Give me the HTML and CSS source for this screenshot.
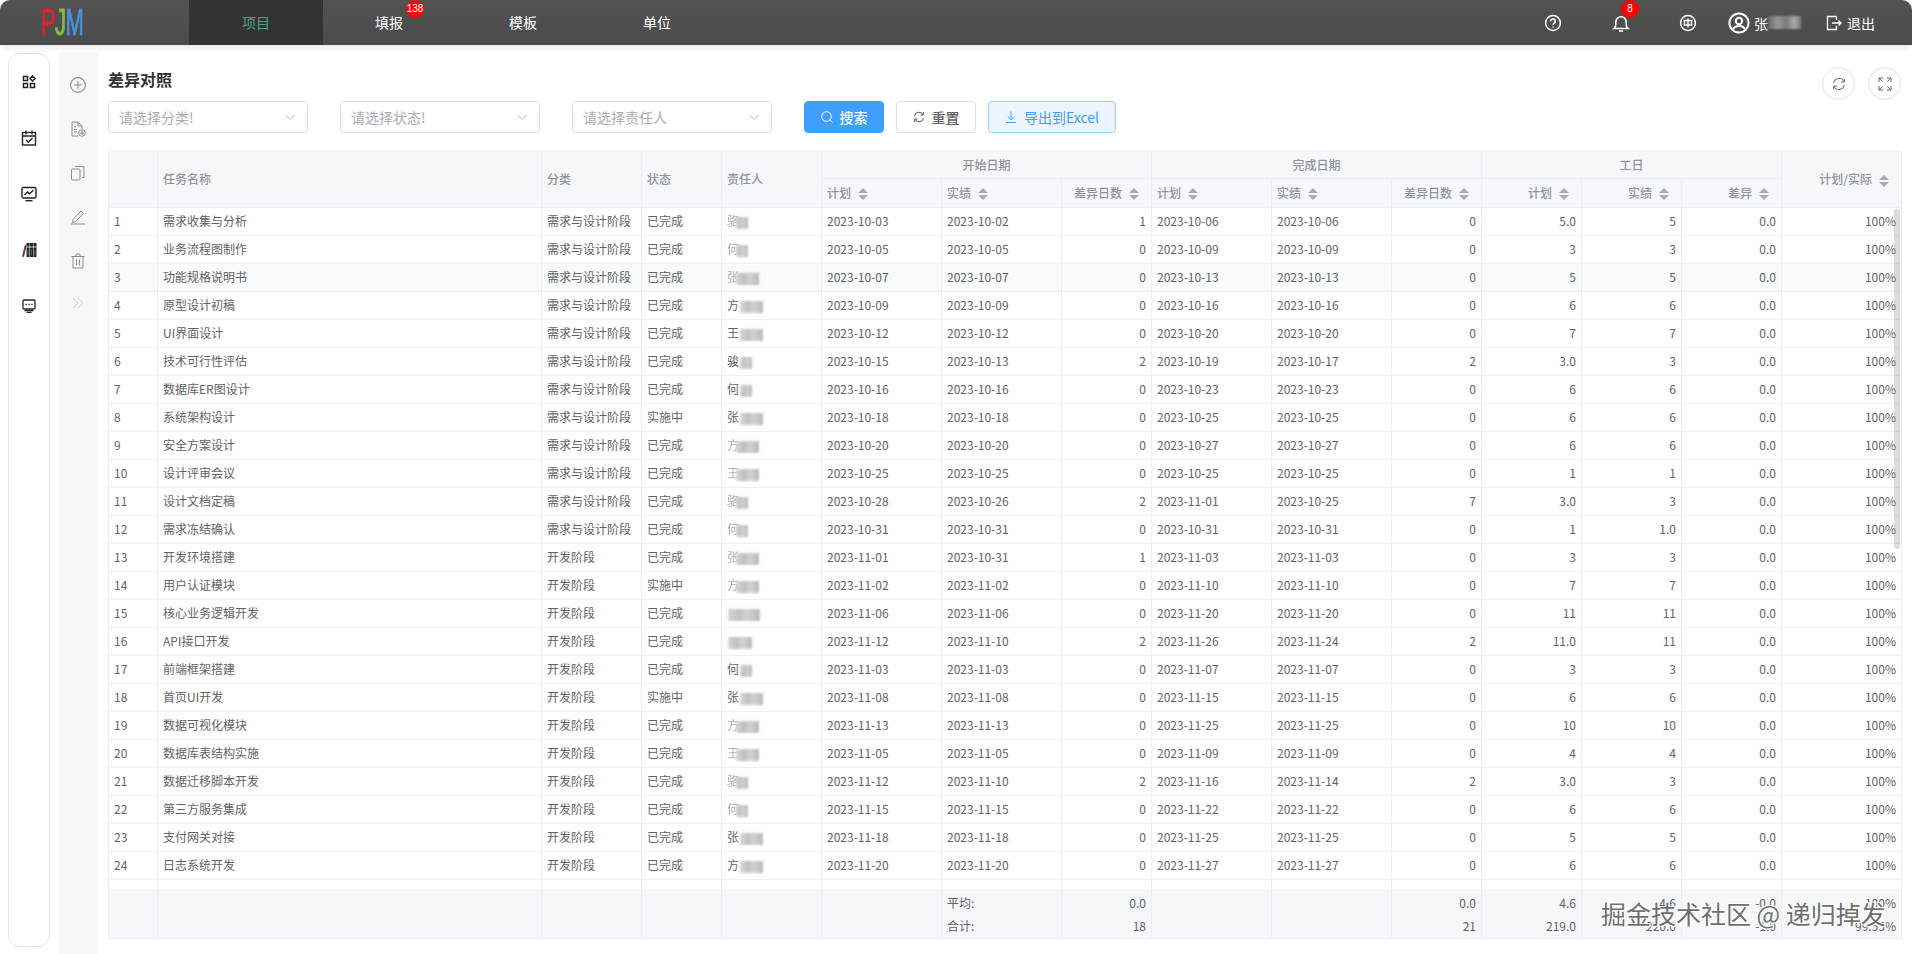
FILE: index.html
```html
<!DOCTYPE html>
<html lang="zh">
<head>
<meta charset="utf-8">
<title>差异对照</title>
<link rel="stylesheet" href="styles.css">
</head>
<body>
<header class="nav">
  <div class="logo"><span class="logo-text"><b class="lp">P</b><b class="lj">J</b><b class="lm">M</b></span></div>
  <a class="tab active">项目</a>
  <a class="tab">填报<span class="badge b-tab">138</span></a>
  <a class="tab">模板</a>
  <a class="tab">单位</a>
  <div class="nav-right">
    <span class="ni ni-help"><svg viewBox="0 0 18 18" width="18" height="18" fill="none" stroke="#fff" stroke-width="1.5"><circle cx="9" cy="9" r="7.4"/><path d="M6.7 7.2a2.3 2.3 0 1 1 3.5 2c-.8.5-1.2.9-1.2 1.8"/><path d="M9 12.4v1.2"/></svg></span>
    <span class="ni ni-bell"><svg viewBox="0 0 20 20" width="20" height="20" fill="none" stroke="#fff" stroke-width="1.6"><path d="M3 15.5c1.2-1 1.8-2 1.8-4V9a5.2 5.2 0 0 1 10.4 0v2.500c0 2 .6 3 1.800 4z"/><path d="M8 18h4"/></svg><span class="badge b-bell">8</span></span>
    <span class="ni ni-lang"><svg viewBox="0 0 18 18" width="18" height="18" fill="none" stroke="#fff" stroke-width="1.5"><circle cx="9" cy="9" r="7.4"/><path d="M5.500 6.500h7v4.500h-7z"/><path d="M9 4.500v9"/></svg></span>
    <span class="ni ni-user"><svg viewBox="0 0 22 22" width="22" height="22" fill="none" stroke="#fff" stroke-width="2"><circle cx="11" cy="11" r="9.600"/><circle cx="11" cy="9" r="3.200"/><path d="M5 17.500c1-2.600 3.200-3.500 6-3.500s5 .9 6 3.500"/></svg></span>
    <span class="uname">张<i class="uname-blur"></i></span>
    <span class="ni ni-out"><svg viewBox="0 0 16 16" width="16" height="16" fill="none" stroke="#fff" stroke-width="1.300"><path d="M10.500 1.500h-9v13h9v-3.500"/><path d="M10.500 5V1.500"/><path d="M6 8h9M12.500 5.500 15 8l-2.500 2.500"/></svg></span>
    <span class="logout">退出</span>
  </div>
</header>

<div class="shell">
  <aside class="side">
    <svg class="si" viewBox="0 0 14 14" width="14" height="14" fill="none" stroke="#222" stroke-width="1.500"><rect x="1.500" y="1.500" width="4" height="4"/><rect x="1.500" y="8.500" width="4" height="4"/><rect x="8.500" y="8.500" width="4" height="4"/><path d="M10.500 1 13 3.500 10.500 6 8 3.500z"/></svg>
    <svg class="si" viewBox="0 0 16 16" width="16" height="16" fill="none" stroke="#222" stroke-width="1.400"><rect x="1.500" y="2.500" width="13" height="12.500"/><path d="M1.500 6h13M5 .5v4M11 .5v4"/><path d="m5 10 2.300 2.300L11.500 8"/></svg>
    <svg class="si" viewBox="0 0 16 16" width="16" height="16" fill="none" stroke="#222" stroke-width="1.400"><rect x="1" y="1.500" width="14" height="10.500" rx="1.500"/><path d="m3.500 9 3-3 2 1.800L12.500 4"/><path d="M4.500 14.700h7"/></svg>
    <svg class="si" viewBox="0 0 16 16" width="16" height="16"><path d="M5.500 1h3v14h-3zM9 1h3v14H9zM12.500 1H15.500v14h-3z" fill="#222"/><path d="M1 14.500 3.800 3l1.700.5L3 15z" fill="#6d3a3a"/><path d="M5.500 5h10" stroke="#fff" stroke-width=".8"/><path d="M7 7.500v6M10.500 7.500v6M14 7.500v6" stroke="#777" stroke-width=".7"/></svg>
    <svg class="si si-last" viewBox="0 0 14 14" width="14" height="14" fill="none" stroke="#222" stroke-width="1.300"><rect x="1" y="1" width="12" height="9" rx="1.200"/><path d="M3.500 5.500h1.300M6.400 5.500h1.300M9.300 5.500h1.300" stroke-width="1.400"/><path d="M2.500 11.600h9M4.500 13.300h5"/></svg>
  </aside>
  <nav class="tools">
    <svg viewBox="0 0 16 16" width="16" height="16" fill="none" stroke="#8c8c8c" stroke-width="1.100"><circle cx="8" cy="8" r="7.400"/><path d="M8 4v8M4 8h8"/></svg>
    <svg viewBox="0 0 16 16" width="16" height="16" fill="none" stroke="#8c8c8c" stroke-width="1"><path d="M8 15H2V1h6l4 4v3"/><path d="M8 1v4h4M4 6h2M4 8.500h3M4 11h3"/><circle cx="12" cy="12" r="3.300"/><path d="M12 10v4M10 12h4"/></svg>
    <svg viewBox="0 0 16 16" width="16" height="16" fill="none" stroke="#8c8c8c" stroke-width="1"><rect x="1.500" y="4" width="8.500" height="11" rx="1"/><path d="M5 1.500h9v11h-2"/></svg>
    <svg viewBox="0 0 16 16" width="16" height="16" fill="none" stroke="#8c8c8c" stroke-width="1"><path d="m3 10.500 8-8.500 2.500 2.300-8 8.400-3 .8z"/><path d="M1 15h14"/></svg>
    <svg viewBox="0 0 16 16" width="16" height="16" fill="none" stroke="#8c8c8c" stroke-width="1"><path d="M1.500 3.500h13M6 3.500V1h4v2.500"/><path d="M3 3.500V15h10V3.500"/><path d="M6.500 6.500v6M9.500 6.500v6"/></svg>
    <svg class="t-more" viewBox="0 0 12 12" width="12" height="12" fill="none" stroke="#d0d0d0" stroke-width="1"><path d="m1 1 5 5-5 5M6 1l5 5-5 5"/></svg>
  </nav>

  <main class="main">
    <div class="head">
      <h1 class="title">差异对照</h1>
      <div class="round-group">
        <span class="round"><svg viewBox="0 0 14 14" width="14" height="14" fill="none" stroke="#666" stroke-width="1"><path d="M1.500 6A5.600 5.600 0 0 1 12 4.500"/><path d="M12.500 8A5.600 5.600 0 0 1 2 9.500"/><path d="M12.300 1.800V5H9.200M1.700 12.200V9h3.100"/></svg></span>
        <span class="round"><svg viewBox="0 0 14 14" width="14" height="14" fill="none" stroke="#666" stroke-width="1"><path d="M1 5V1h4M13 5V1H9M1 9v4h4M13 9v4H9"/><path d="m1 1 3.500 3.500M13 1 9.500 4.500M1 13l3.500-3.500M13 13 9.500 9.500"/></svg></span>
      </div>
    </div>

    <div class="filters">
      <div class="select"><span>请选择分类!</span><svg viewBox="0 0 12 12" width="12" height="12" fill="none" stroke="#a8abb2"><path d="m1.500 4 4.500 4.500L10.500 4"/></svg></div>
      <div class="select"><span>请选择状态!</span><svg viewBox="0 0 12 12" width="12" height="12" fill="none" stroke="#a8abb2"><path d="m1.500 4 4.500 4.500L10.500 4"/></svg></div>
      <div class="select"><span>请选择责任人</span><svg viewBox="0 0 12 12" width="12" height="12" fill="none" stroke="#a8abb2"><path d="m1.500 4 4.500 4.500L10.500 4"/></svg></div>
      <div class="btns">
        <button class="btn primary"><svg viewBox="0 0 12 12" width="12" height="12" fill="none" stroke="#fff"><circle cx="5.500" cy="5.500" r="4.800"/><path d="m9 9 2.500 2.500"/></svg>搜索</button>
        <button class="btn"><svg viewBox="0 0 12 12" width="12" height="12" fill="none" stroke="#555"><path d="M1.500 5A4.600 4.600 0 0 1 10 3.500M10.500 7A4.600 4.600 0 0 1 2 8.500"/><path d="M10.300 1v3H7.500M1.700 11V8h2.800"/></svg>重置</button>
        <button class="btn export"><svg viewBox="0 0 12 12" width="12" height="12" fill="none" stroke="#409eff"><path d="M6 .5v8M2.800 5.500 6 8.700l3.200-3.200M1 11.500h10"/></svg>导出到Excel</button>
      </div>
    </div>

    <div class="table-wrap">
      <table class="grid">
        <colgroup>
          <col class="c-no"><col class="c-name"><col class="c-cat"><col class="c-st"><col class="c-own">
          <col class="c-120"><col class="c-120"><col class="c-90">
          <col class="c-120"><col class="c-120"><col class="c-90">
          <col class="c-100"><col class="c-100"><col class="c-100"><col class="c-120">
        </colgroup>
        <thead>
          <tr class="h1">
            <th rowspan="2"></th><th rowspan="2">任务名称</th><th rowspan="2">分类</th><th rowspan="2">状态</th><th rowspan="2">责任人</th>
            <th colspan="3" class="ctr">开始日期</th><th colspan="3" class="ctr">完成日期</th><th colspan="3" class="ctr">工日</th>
            <th rowspan="2" class="r">计划/实际<span class="sort"></span></th>
          </tr>
          <tr class="h2">
            <th>计划<span class="sort"></span></th><th>实绩<span class="sort"></span></th><th class="r">差异日数<span class="sort"></span></th>
            <th>计划<span class="sort"></span></th><th>实绩<span class="sort"></span></th><th class="r">差异日数<span class="sort"></span></th>
            <th class="r">计划<span class="sort"></span></th><th class="r">实绩<span class="sort"></span></th><th class="r">差异<span class="sort"></span></th>
          </tr>
        </thead>
        <tbody>
          <tr><td>1</td><td>需求收集与分析</td><td>需求与设计阶段</td><td>已完成</td><td><span class="half">骆</span><i class="bl w2"></i></td><td>2023-10-03</td><td>2023-10-02</td><td class="r">1</td><td>2023-10-06</td><td>2023-10-06</td><td class="r">0</td><td class="r">5.0</td><td class="r">5</td><td class="r">0.0</td><td class="r">100%</td></tr>
          <tr><td>2</td><td>业务流程图制作</td><td>需求与设计阶段</td><td>已完成</td><td><span class="half">何</span><i class="bl w2"></i></td><td>2023-10-05</td><td>2023-10-05</td><td class="r">0</td><td>2023-10-09</td><td>2023-10-09</td><td class="r">0</td><td class="r">3</td><td class="r">3</td><td class="r">0.0</td><td class="r">100%</td></tr>
          <tr class="hover"><td>3</td><td>功能规格说明书</td><td>需求与设计阶段</td><td>已完成</td><td><span class="half">张</span><i class="bl w3"></i></td><td>2023-10-07</td><td>2023-10-07</td><td class="r">0</td><td>2023-10-13</td><td>2023-10-13</td><td class="r">0</td><td class="r">5</td><td class="r">5</td><td class="r">0.0</td><td class="r">100%</td></tr>
          <tr><td>4</td><td>原型设计初稿</td><td>需求与设计阶段</td><td>已完成</td><td>方<i class="bl w3"></i></td><td>2023-10-09</td><td>2023-10-09</td><td class="r">0</td><td>2023-10-16</td><td>2023-10-16</td><td class="r">0</td><td class="r">6</td><td class="r">6</td><td class="r">0.0</td><td class="r">100%</td></tr>
          <tr><td>5</td><td>UI界面设计</td><td>需求与设计阶段</td><td>已完成</td><td>王<i class="bl w3"></i></td><td>2023-10-12</td><td>2023-10-12</td><td class="r">0</td><td>2023-10-20</td><td>2023-10-20</td><td class="r">0</td><td class="r">7</td><td class="r">7</td><td class="r">0.0</td><td class="r">100%</td></tr>
          <tr><td>6</td><td>技术可行性评估</td><td>需求与设计阶段</td><td>已完成</td><td>骏<i class="bl w2"></i></td><td>2023-10-15</td><td>2023-10-13</td><td class="r">2</td><td>2023-10-19</td><td>2023-10-17</td><td class="r">2</td><td class="r">3.0</td><td class="r">3</td><td class="r">0.0</td><td class="r">100%</td></tr>
          <tr><td>7</td><td>数据库ER图设计</td><td>需求与设计阶段</td><td>已完成</td><td>何<i class="bl w2"></i></td><td>2023-10-16</td><td>2023-10-16</td><td class="r">0</td><td>2023-10-23</td><td>2023-10-23</td><td class="r">0</td><td class="r">6</td><td class="r">6</td><td class="r">0.0</td><td class="r">100%</td></tr>
          <tr><td>8</td><td>系统架构设计</td><td>需求与设计阶段</td><td>实施中</td><td>张<i class="bl w3"></i></td><td>2023-10-18</td><td>2023-10-18</td><td class="r">0</td><td>2023-10-25</td><td>2023-10-25</td><td class="r">0</td><td class="r">6</td><td class="r">6</td><td class="r">0.0</td><td class="r">100%</td></tr>
          <tr><td>9</td><td>安全方案设计</td><td>需求与设计阶段</td><td>已完成</td><td><span class="half">方</span><i class="bl w3"></i></td><td>2023-10-20</td><td>2023-10-20</td><td class="r">0</td><td>2023-10-27</td><td>2023-10-27</td><td class="r">0</td><td class="r">6</td><td class="r">6</td><td class="r">0.0</td><td class="r">100%</td></tr>
          <tr><td>10</td><td>设计评审会议</td><td>需求与设计阶段</td><td>已完成</td><td><span class="half">王</span><i class="bl w3"></i></td><td>2023-10-25</td><td>2023-10-25</td><td class="r">0</td><td>2023-10-25</td><td>2023-10-25</td><td class="r">0</td><td class="r">1</td><td class="r">1</td><td class="r">0.0</td><td class="r">100%</td></tr>
          <tr><td>11</td><td>设计文档定稿</td><td>需求与设计阶段</td><td>已完成</td><td><span class="half">骆</span><i class="bl w2"></i></td><td>2023-10-28</td><td>2023-10-26</td><td class="r">2</td><td>2023-11-01</td><td>2023-10-25</td><td class="r">7</td><td class="r">3.0</td><td class="r">3</td><td class="r">0.0</td><td class="r">100%</td></tr>
          <tr><td>12</td><td>需求冻结确认</td><td>需求与设计阶段</td><td>已完成</td><td><span class="half">何</span><i class="bl w2"></i></td><td>2023-10-31</td><td>2023-10-31</td><td class="r">0</td><td>2023-10-31</td><td>2023-10-31</td><td class="r">0</td><td class="r">1</td><td class="r">1.0</td><td class="r">0.0</td><td class="r">100%</td></tr>
          <tr><td>13</td><td>开发环境搭建</td><td>开发阶段</td><td>已完成</td><td><span class="half">张</span><i class="bl w3"></i></td><td>2023-11-01</td><td>2023-10-31</td><td class="r">1</td><td>2023-11-03</td><td>2023-11-03</td><td class="r">0</td><td class="r">3</td><td class="r">3</td><td class="r">0.0</td><td class="r">100%</td></tr>
          <tr><td>14</td><td>用户认证模块</td><td>开发阶段</td><td>实施中</td><td><span class="half">方</span><i class="bl w3"></i></td><td>2023-11-02</td><td>2023-11-02</td><td class="r">0</td><td>2023-11-10</td><td>2023-11-10</td><td class="r">0</td><td class="r">7</td><td class="r">7</td><td class="r">0.0</td><td class="r">100%</td></tr>
          <tr><td>15</td><td>核心业务逻辑开发</td><td>开发阶段</td><td>已完成</td><td><i class="bl w4"></i></td><td>2023-11-06</td><td>2023-11-06</td><td class="r">0</td><td>2023-11-20</td><td>2023-11-20</td><td class="r">0</td><td class="r">11</td><td class="r">11</td><td class="r">0.0</td><td class="r">100%</td></tr>
          <tr><td>16</td><td>API接口开发</td><td>开发阶段</td><td>已完成</td><td><i class="bl w5"></i></td><td>2023-11-12</td><td>2023-11-10</td><td class="r">2</td><td>2023-11-26</td><td>2023-11-24</td><td class="r">2</td><td class="r">11.0</td><td class="r">11</td><td class="r">0.0</td><td class="r">100%</td></tr>
          <tr><td>17</td><td>前端框架搭建</td><td>开发阶段</td><td>已完成</td><td>何<i class="bl w2"></i></td><td>2023-11-03</td><td>2023-11-03</td><td class="r">0</td><td>2023-11-07</td><td>2023-11-07</td><td class="r">0</td><td class="r">3</td><td class="r">3</td><td class="r">0.0</td><td class="r">100%</td></tr>
          <tr><td>18</td><td>首页UI开发</td><td>开发阶段</td><td>实施中</td><td>张<i class="bl w3"></i></td><td>2023-11-08</td><td>2023-11-08</td><td class="r">0</td><td>2023-11-15</td><td>2023-11-15</td><td class="r">0</td><td class="r">6</td><td class="r">6</td><td class="r">0.0</td><td class="r">100%</td></tr>
          <tr><td>19</td><td>数据可视化模块</td><td>开发阶段</td><td>已完成</td><td><span class="half">方</span><i class="bl w3"></i></td><td>2023-11-13</td><td>2023-11-13</td><td class="r">0</td><td>2023-11-25</td><td>2023-11-25</td><td class="r">0</td><td class="r">10</td><td class="r">10</td><td class="r">0.0</td><td class="r">100%</td></tr>
          <tr><td>20</td><td>数据库表结构实施</td><td>开发阶段</td><td>已完成</td><td><span class="half">王</span><i class="bl w3"></i></td><td>2023-11-05</td><td>2023-11-05</td><td class="r">0</td><td>2023-11-09</td><td>2023-11-09</td><td class="r">0</td><td class="r">4</td><td class="r">4</td><td class="r">0.0</td><td class="r">100%</td></tr>
          <tr><td>21</td><td>数据迁移脚本开发</td><td>开发阶段</td><td>已完成</td><td><span class="half">骆</span><i class="bl w2"></i></td><td>2023-11-12</td><td>2023-11-10</td><td class="r">2</td><td>2023-11-16</td><td>2023-11-14</td><td class="r">2</td><td class="r">3.0</td><td class="r">3</td><td class="r">0.0</td><td class="r">100%</td></tr>
          <tr><td>22</td><td>第三方服务集成</td><td>开发阶段</td><td>已完成</td><td><span class="half">何</span><i class="bl w2"></i></td><td>2023-11-15</td><td>2023-11-15</td><td class="r">0</td><td>2023-11-22</td><td>2023-11-22</td><td class="r">0</td><td class="r">6</td><td class="r">6</td><td class="r">0.0</td><td class="r">100%</td></tr>
          <tr><td>23</td><td>支付网关对接</td><td>开发阶段</td><td>已完成</td><td>张<i class="bl w3"></i></td><td>2023-11-18</td><td>2023-11-18</td><td class="r">0</td><td>2023-11-25</td><td>2023-11-25</td><td class="r">0</td><td class="r">5</td><td class="r">5</td><td class="r">0.0</td><td class="r">100%</td></tr>
          <tr><td>24</td><td>日志系统开发</td><td>开发阶段</td><td>已完成</td><td>方<i class="bl w3"></i></td><td>2023-11-20</td><td>2023-11-20</td><td class="r">0</td><td>2023-11-27</td><td>2023-11-27</td><td class="r">0</td><td class="r">6</td><td class="r">6</td><td class="r">0.0</td><td class="r">100%</td></tr>
          <tr class="gap"><td></td><td></td><td></td><td></td><td></td><td></td><td></td><td></td><td></td><td></td><td></td><td></td><td></td><td></td><td></td></tr>
        </tbody>
        <tfoot>
          <tr class="f1"><td></td><td></td><td></td><td></td><td></td><td></td><td>平均:</td><td class="r">0.0</td><td></td><td></td><td class="r">0.0</td><td class="r">4.6</td><td class="r">4.6</td><td class="r">-0.0</td><td class="r">100%</td></tr>
          <tr class="f2"><td></td><td></td><td></td><td></td><td></td><td></td><td>合计:</td><td class="r">18</td><td></td><td></td><td class="r">21</td><td class="r">219.0</td><td class="r">220.0</td><td class="r">-1.0</td><td class="r">99.55%</td></tr>
        </tfoot>
      </table>
      <span class="scroll-thumb"></span>
    </div>
  </main>
</div>
<div class="watermark">掘金技术社区 @ 递归掉发</div>
</body>
</html>
```
FILE: styles.css
```css
* { box-sizing: border-box; }
html, body { margin: 0; height: 100%; }
body {
  width: 1912px;
  height: 954px;
  overflow: hidden;
  background: #fff;
  font-family: "Noto Sans CJK SC", "Noto Sans", sans-serif;
  font-size: 12px;
  color: #606266;
  display: flex;
  flex-direction: column;
}

/* top bar */
.nav {
  height: 45px;
  flex: none;
  display: flex;
  background: linear-gradient(#535353, #4b4b4b);
  border-radius: 10px 10px 0 0;
  color: #fff;
  box-shadow: 0 3px 6px rgba(0, 0, 0, .09);
  position: relative;
  z-index: 2;
}
.logo { width: 189px; padding-left: 41px; flex: none; }
.logo-text {
  display: inline-block;
  font: 400 36px/45px "Liberation Sans", sans-serif;
  letter-spacing: -1px;
  transform: scaleX(.61);
  transform-origin: 0 50%;
  white-space: nowrap;
  -webkit-text-stroke: 1px currentColor;
}
.logo-text b { font-weight: 400; }
.lp { color: #e0202a; }
.lj { color: #86bc3e; }
.lm { color: #4a8fd8; }
.tab {
  position: relative;
  width: 134px;
  flex: none;
  padding-right: 2px;
  text-align: center;
  font-size: 14px;
  line-height: 45px;
}
.tab.active { background: #333; color: #4fa083; padding-right: 0; }
.badge {
  position: absolute;
  background: #f00;
  color: #fff;
  border-radius: 10px;
  font: 10px/18px "Liberation Sans", sans-serif;
  height: 18px;
  text-align: center;
}
.b-tab { left: 83px; top: 0; width: 18px; }
.b-bell { left: 10px; top: 0; width: 18px; }
.nav-right {
  margin-left: auto;
  padding-right: 37px;
  display: flex;
  align-items: center;
  font-size: 14px;
}
.ni { position: relative; display: flex; align-items: center; height: 45px; }
.ni-bell { margin-left: 49px; }
.ni-lang { margin-left: 48px; }
.ni-user { margin-left: 31px; }
.ni-out { margin-left: 25px; }
.uname { margin-left: 4px; display: flex; align-items: center; }
.uname-blur {
  width: 33px;
  height: 13px;
  background: linear-gradient(90deg, #666, #9c9c94 30%, #777 55%, #aaa 80%, #777);
  filter: blur(1.2px);
}
.logout { margin-left: 5px; }

/* frame */
.shell { flex: 1; min-height: 0; display: flex; padding-top: 7px; }
.side {
  width: 42px;
  margin: 1px 0 7px 8px;
  flex: none;
  border: 1px solid #e2e2e2;
  border-radius: 12px;
  display: flex;
  flex-direction: column;
  align-items: center;
  gap: 40px;
  padding-top: 21px;
}
.side .si:first-child { margin-bottom: 1px; }
.side .si-last { margin-top: 1px; }
.tools {
  width: 40px;
  margin-left: 8px;
  flex: none;
  background: #f7f7f7;
  display: flex;
  flex-direction: column;
  align-items: center;
  gap: 28px;
  padding-top: 25px;
}
.main {
  flex: 1;
  min-width: 0;
  padding: 15px 10px 0;
}
.head {
  height: 34px;
  display: flex;
  justify-content: space-between;
  align-items: flex-start;
}
.title {
  margin: 2px 0 0;
  font-size: 16px;
  line-height: 20px;
  font-weight: 700;
  color: #303133;
}
.round-group { display: flex; gap: 13px; margin-right: 1px; }
.round {
  width: 33px;
  height: 33px;
  border: 1px solid #dcdfe6;
  border-radius: 50%;
  display: flex;
  align-items: center;
  justify-content: center;
}

/* filters */
.filters { display: flex; gap: 32px; height: 32px; margin-bottom: 18px; }
.select {
  width: 200px;
  height: 32px;
  border: 1px solid #dcdfe6;
  border-radius: 4px;
  padding: 0 11px 0 10px;
  display: flex;
  align-items: center;
  justify-content: space-between;
  color: #a8abb2;
  font-size: 14px;
}
.btns { display: flex; gap: 12px; }
.btn {
  height: 32px;
  width: 80px;
  border: 1px solid #dcdfe6;
  border-radius: 4px;
  background: #fff;
  color: #606266;
  font: 500 14px "Noto Sans CJK SC", sans-serif;
  display: flex;
  align-items: center;
  justify-content: center;
  gap: 7px;
  padding: 0;
}
.btn.primary { background: #409eff; border-color: #409eff; color: #fff; }
.btn.export { width: 128px; background: #ecf5ff; border-color: #a0cfff; color: #409eff; font-weight: 400; }

/* table */
.table-wrap { position: relative; width: 1793px; }
.grid {
  table-layout: fixed;
  width: 1793px;
  border-collapse: collapse;
  border: 1px solid #ebeef5;
}
.c-no { width: 49px; }
.c-name { width: 384px; }
.c-cat { width: 100px; }
.c-st { width: 80px; }
.c-own { width: 100px; }
.c-120 { width: 120px; }
.c-90 { width: 90px; }
.c-100 { width: 100px; }
.grid th, .grid td {
  border: 1px solid #ebeef5;
  padding: 0 5px 1px;
  font-size: 12px;
  line-height: 16px;
  text-align: left;
  white-space: nowrap;
  overflow: hidden;
}
.grid th { background: #f5f7fa; color: #909399; font-weight: 500; }
.grid td.r { text-align: right; }
.grid th.r { text-align: right; padding-right: 12px; }
.grid .ctr { text-align: center; }
.h1 { height: 27px; }
.h2 { height: 29px; }
tbody tr { height: 28px; }
tbody tr.hover td { background: #f8fafc; }
tbody tr.gap { height: 9px; }
tr.gap td { border-bottom: 0; padding: 0; }
tfoot td { background: #f5f7fa; }
.grid tfoot td { border-top: 0; border-bottom: 0; }
.grid tfoot .f2 td { border-bottom: 1px solid #ebeef5; }
.f1 { height: 27px; }
.f1 td { padding-top: 2px; }
.f2 { height: 23px; }
.sort {
  display: inline-block;
  vertical-align: middle;
  width: 10px;
  margin-left: 7px;
}
.sort::before, .sort::after {
  content: "";
  display: block;
  border: 5px solid transparent;
}
.sort::before { border-top: 0; border-bottom-color: #a8abb2; margin-bottom: 2px; }
.sort::after { border-bottom: 0; border-top-color: #a8abb2; }
.half { opacity: .55; }
.bl {
  display: inline-block;
  vertical-align: middle;
  height: 12px;
  margin-left: 1px;
  background: linear-gradient(90deg, #d8d8da, #bfc0c4 35%, #d2d2d4 60%, #b9babe);
  filter: blur(.9px);
}
.half + .bl { margin-left: -3px; }
.w2 { width: 12px; }
.w3 { width: 23px; }
.w4 { width: 32px; }
.w5 { width: 24px; }
.scroll-thumb {
  position: absolute;
  left: 1786px;
  top: 58px;
  width: 6px;
  height: 340px;
  border-radius: 3px;
  background: rgba(144, 147, 153, .32);
}

/* overlay */
.watermark {
  position: absolute;
  left: 1601px;
  top: 894px;
  font-size: 25px;
  line-height: 38px;
  white-space: nowrap;
  color: rgba(70, 70, 70, .8);
  text-shadow: 1px 1px 0 #fff, -1px -1px 0 #fff, 1px -1px 0 #fff, -1px 1px 0 #fff;
}
```
